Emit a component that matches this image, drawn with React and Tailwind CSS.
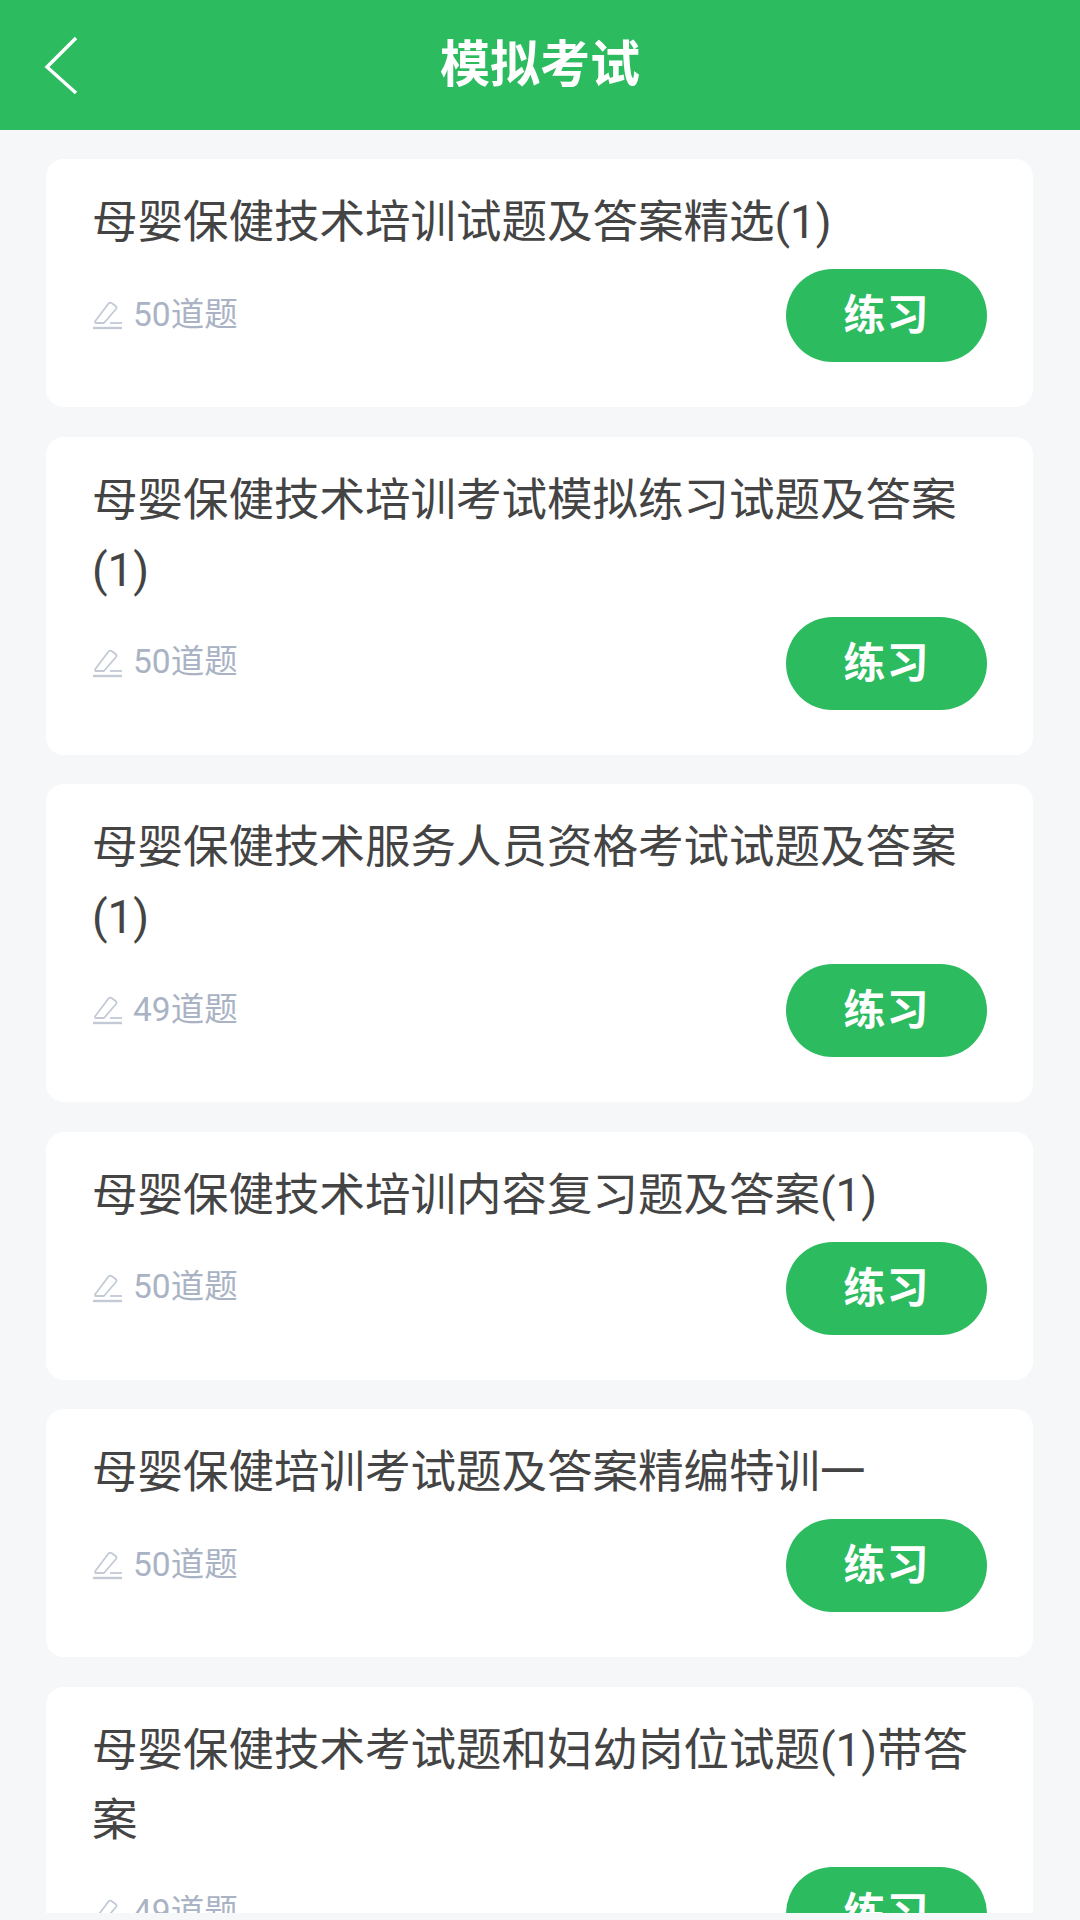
const exams = [
  { title: "母婴保健技术培训试题及答案精选(1)", count: 50 },
  { title: "母婴保健技术培训考试模拟练习试题及答案(1)", count: 50 },
  { title: "母婴保健技术服务人员资格考试试题及答案(1)", count: 49 },
  { title: "母婴保健技术培训内容复习题及答案(1)", count: 50 },
  { title: "母婴保健培训考试题及答案精编特训一", count: 50 },
  { title: "母婴保健技术考试题和妇幼岗位试题(1)带答案", count: 49 },
];

const PencilIcon = () => (
  <svg width="31" height="31" viewBox="0 0 31 31" fill="none" stroke="#c3cad6" strokeWidth="1.8" className="shrink-0">
    <path d="M3 22.5 L16.5 4.5 Q18 3 19.8 4.2 L23.6 7 Q25.2 8.4 24 10 L12 24 H3.4 Z" strokeLinejoin="round" />
    <path d="M1 29 H30" strokeWidth="2.4" />
    <path d="M18 24 H30" strokeWidth="1.8" />
  </svg>
);

const ExamCard = ({ exam }) => (
  <div className="bg-white rounded-[18px] pl-[46px] pr-[46px] pt-[29px] pb-[45px]">
    <p className="text-[45.5px] leading-[70px] text-[#444444]">{exam.title}</p>
    <div className="flex flex-row items-center justify-between mt-[11px]">
      <div className="flex flex-row items-center -mt-[2px]">
        <PencilIcon />
        <span className="ml-[10px] text-[33.5px] leading-[40px] text-[#a9b3c4]">{exam.count}道题</span>
      </div>
      <button className="w-[201px] h-[93px] rounded-full bg-[#2dbb60] text-white text-[42px] font-bold tracking-[1px] flex items-center justify-center">
        练习
      </button>
    </div>
  </div>
);

export default function App() {
  return (
    <div
      className="w-[1080px] h-[1920px] bg-[#f5f7f9] overflow-hidden flex flex-col"
      style={{ fontFamily: 'Roboto, "Noto Sans CJK SC", sans-serif' }}
    >
      <header className="relative h-[130px] shrink-0 bg-[#2dbb60] flex items-center justify-center">
        <svg width="40" height="62" viewBox="0 0 40 62" fill="none" stroke="white" strokeWidth="3.4" className="absolute left-[42px] top-[34px]">
          <path d="M34 4 L5 33 L34 59" />
        </svg>
        <h1 className="text-[50px] font-bold text-white">模拟考试</h1>
      </header>
      <div className="h-[1783px] overflow-hidden pl-[46px] pr-[47px] pt-[29px] flex flex-col gap-[29.5px]">
        {exams.map((exam, i) => (
          <div key={i} className="shrink-0">
            <ExamCard exam={exam} />
          </div>
        ))}
      </div>
    </div>
  );
}
